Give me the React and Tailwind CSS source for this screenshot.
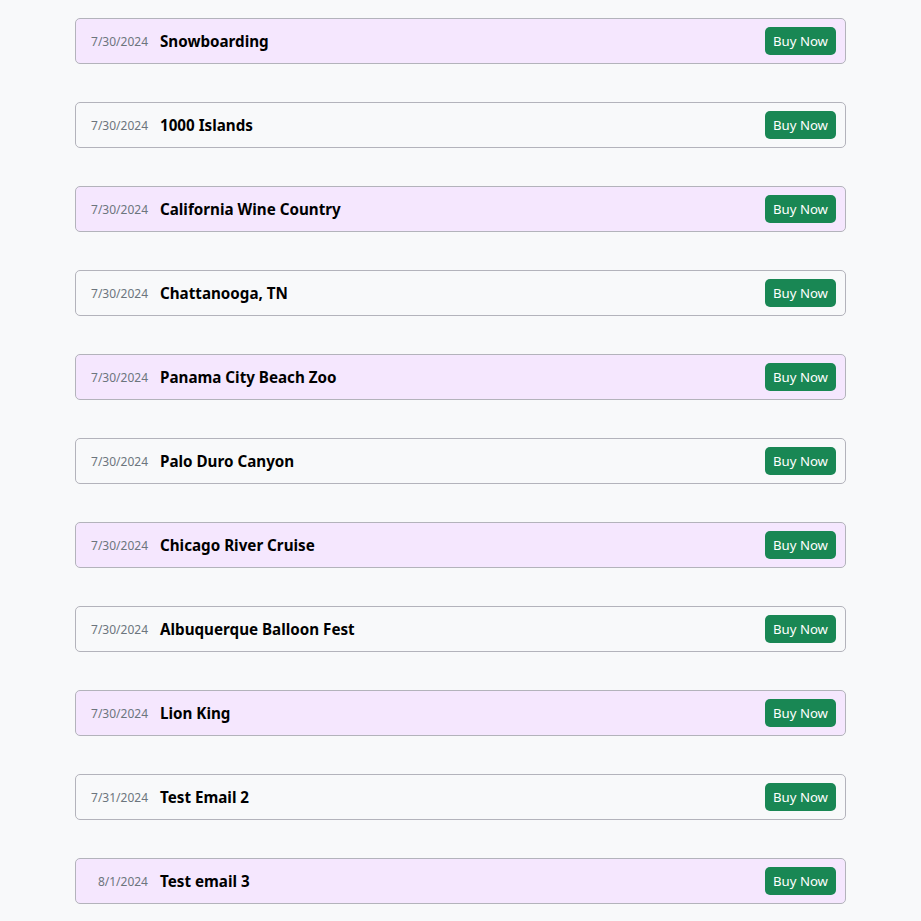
import React from 'react';

const trips = [
  { date: '7/30/2024', name: 'Snowboarding' },
  { date: '7/30/2024', name: '1000 Islands' },
  { date: '7/30/2024', name: 'California Wine Country' },
  { date: '7/30/2024', name: 'Chattanooga, TN' },
  { date: '7/30/2024', name: 'Panama City Beach Zoo' },
  { date: '7/30/2024', name: 'Palo Duro Canyon' },
  { date: '7/30/2024', name: 'Chicago River Cruise' },
  { date: '7/30/2024', name: 'Albuquerque Balloon Fest' },
  { date: '7/30/2024', name: 'Lion King' },
  { date: '7/31/2024', name: 'Test Email 2' },
  { date: '8/1/2024', name: 'Test email 3' },
];

function TripRow({ trip, shaded }) {
  return (
    <div
      className={`flex items-center h-[46px] pl-2 pr-[9px] border border-[#b3b3bb] rounded-[5px] ${
        shaded ? 'bg-[#f5e7fe]' : 'bg-[#f8f9fa]'
      }`}
    >
      <span className="w-[64px] text-right text-[12px] text-[#6c757d] pt-[2px]">{trip.date}</span>
      <span className="ml-3 text-[15.2px] font-bold text-black">{trip.name}</span>
      <button className="ml-auto h-[28px] w-[71px] pt-[2px] rounded-[5px] bg-[#198754] text-white text-[13.2px]">
        Buy Now
      </button>
    </div>
  );
}

export default function App() {
  return (
    <div className="min-h-screen bg-[#f8f9fa] pt-[18px] pb-10" style={{ fontFamily: '"Noto Sans", "Open Sans", sans-serif' }}>
      <div className="w-[771px] mx-auto flex flex-col gap-[38px]">
        {trips.map((t, i) => (
          <TripRow key={i} trip={t} shaded={i % 2 === 0} />
        ))}
      </div>
    </div>
  );
}
